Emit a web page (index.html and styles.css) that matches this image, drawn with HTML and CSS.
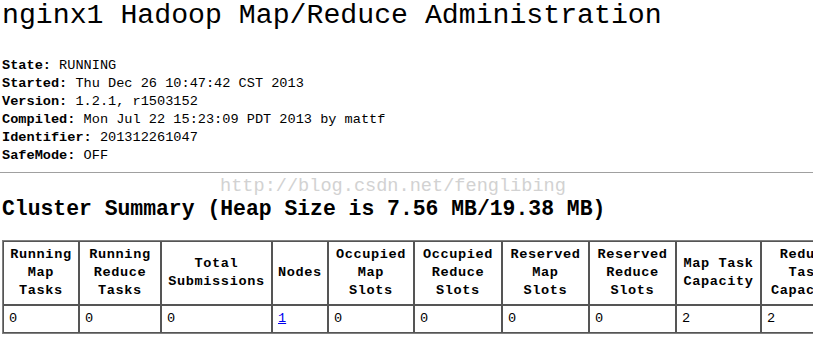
FILE: index.html
```html
<!doctype html>
<html lang="en">
<head>
    <meta charset="UTF-8">
    <title>nginx1 Hadoop Map/Reduce Administration</title>
    <link rel="stylesheet" href="styles.css">
</head>
<body>
<h1>nginx1 Hadoop Map/Reduce Administration</h1>

<div class="info">
    <b>State:</b> RUNNING<br>
    <b>Started:</b> Thu Dec 26 10:47:42 CST 2013<br>
    <b>Version:</b> 1.2.1, r1503152<br>
    <b>Compiled:</b> Mon Jul 22 15:23:09 PDT 2013 by mattf<br>
    <b>Identifier:</b> 201312261047<br>
    <b>SafeMode:</b> OFF
</div>

<hr>

<div class="summary">
    <span class="watermark">http://blog.csdn.net/fenglibing</span>
    <h2>Cluster Summary (Heap Size is 7.56 MB/19.38 MB)</h2>
</div>

<table class="cluster">
    <colgroup>
        <col class="w76"><col class="w82"><col class="w111"><col class="w56"><col class="w86">
        <col class="w88"><col class="w87"><col class="w87"><col class="w85"><col class="w90">
        <col class="w90"><col class="w100"><col class="w100"><col class="w90">
    </colgroup>
    <tr>
        <th>Running<br>Map<br>Tasks</th>
        <th>Running<br>Reduce<br>Tasks</th>
        <th>Total<br>Submissions</th>
        <th>Nodes</th>
        <th>Occupied<br>Map<br>Slots</th>
        <th>Occupied<br>Reduce<br>Slots</th>
        <th>Reserved<br>Map<br>Slots</th>
        <th>Reserved<br>Reduce<br>Slots</th>
        <th>Map Task<br>Capacity</th>
        <th>Reduce<br>Task<br>Capacity</th>
        <th>Avg.<br>Tasks/Node</th>
        <th>Blacklisted<br>Nodes</th>
        <th>Graylisted<br>Nodes</th>
        <th>Excluded<br>Nodes</th>
    </tr>
    <tr>
        <td>0</td>
        <td>0</td>
        <td>0</td>
        <td><a href="#">1</a></td>
        <td>0</td>
        <td>0</td>
        <td>0</td>
        <td>0</td>
        <td>2</td>
        <td>2</td>
        <td>4.00</td>
        <td><a href="#">0</a></td>
        <td><a href="#">0</a></td>
        <td><a href="#">0</a></td>
    </tr>
</table>
</body>
</html>
```

FILE: styles.css
```css
html, body {
    overflow: hidden;
}

body {
    margin: 0;
    padding: 0 0 0 2px;
    font-family: "Liberation Mono", "DejaVu Sans Mono", monospace;
    font-size: 13.6px;
    line-height: 18px;
    color: #000;
    background: #fff;
}

h1 {
    margin: 0;
    font-size: 28.2px;
    font-weight: normal;
    line-height: 32px;
}

.info {
    margin-top: 25px;
}

hr {
    margin: 7px 0 0 -2px;
    border: none;
    border-top: 1px solid #a0a0a0;
    height: 0;
}

.summary {
    position: relative;
    padding-top: 23px;
}

.watermark {
    position: absolute;
    left: 218px;
    top: 4px;
    font-size: 18.6px;
    line-height: 20px;
    color: #d2d2d2;
    white-space: nowrap;
}

h2 {
    margin: 0;
    font-size: 21.4px;
    line-height: 26px;
    white-space: nowrap;
}

.cluster {
    margin-top: 18px;
    border: 1px solid #808080;
    border-spacing: 0;
    table-layout: fixed;
    width: 1158px;
}

.cluster th, .cluster td {
    border: 1px solid #555;
    padding: 4px 5px;
}

.cluster th {
    text-align: center;
    letter-spacing: 0.6px;
}

.cluster td {
    text-align: left;
}

.cluster a {
    color: #0000ee;
}

.w56 { width: 56px; }
.w76 { width: 76px; }
.w82 { width: 82px; }
.w85 { width: 85px; }
.w86 { width: 86px; }
.w87 { width: 87px; }
.w88 { width: 88px; }
.w90 { width: 90px; }
.w100 { width: 100px; }
.w111 { width: 111px; }
```
